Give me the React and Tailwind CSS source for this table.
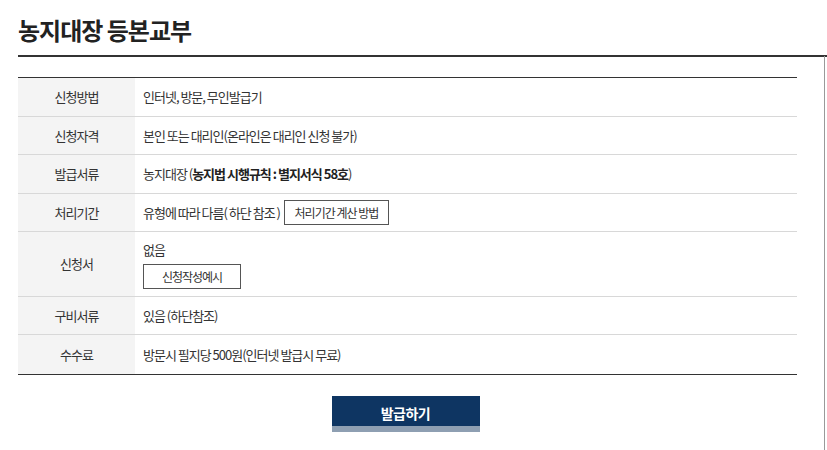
const rows = [
  { label: '신청방법', h: 'h-[39px]', value: <span>인터넷, 방문, 무인발급기</span> },
  { label: '신청자격', h: 'h-[38px]', value: <span>본인 또는 대리인(온라인은 대리인 신청 불가)</span> },
  {
    label: '발급서류',
    h: 'h-[39px]',
    value: (
      <span>
        농지대장 (<b className="font-bold text-[#222]">농지법 시행규칙 : 별지서식 58호</b>)
      </span>
    ),
  },
  {
    label: '처리기간',
    h: 'h-[38px]',
    value: (
      <span className="flex items-center gap-[4px]">
        유형에 따라 다름( 하단 참조 )
        <button className="h-[25px] w-[105px] border border-[#555] bg-white text-[12px] text-[#333]">
          처리기간 계산 방법
        </button>
      </span>
    ),
  },
  {
    label: '신청서',
    h: 'h-[65px]',
    value: (
      <span className="flex flex-col items-start gap-[5px] pt-[1px]">
        없음
        <button className="h-[25px] w-[98px] border border-[#555] bg-white text-[12px] text-[#333]">
          신청작성예시
        </button>
      </span>
    ),
  },
  { label: '구비서류', h: 'h-[38px]', value: <span>있음 (하단참조)</span> },
  { label: '수수료', h: 'h-[39px]', value: <span>방문시 필지당 500원(인터넷 발급시 무료)</span> },
]

export default function App() {
  return (
    <div className="relative h-[450px] w-[827px] overflow-hidden bg-white text-[#333] font-['Noto_Sans_CJK_KR','Noto_Sans',sans-serif]">
      {/* right panel edge */}
      <div className="absolute right-[2px] top-[56px] bottom-0 w-px bg-[#999]" />

      <h1 className="pl-[18px] pt-[14px] h-[55px] text-[24px] font-bold tracking-[-1px] text-[#222] leading-[32px]">
        농지대장 등본교부
      </h1>
      <div className="ml-[18px] h-[2px] bg-[#333]" />

      <div className="mt-[20px] ml-[18px] w-[779px] border-t border-[#333] border-b text-[13px] tracking-[-1px]">
        {rows.map((row, i) => (
          <div
            key={i}
            className={`flex ${row.h} ${i < rows.length - 1 ? 'border-b border-[#d8d8d8]' : ''}`}
          >
            <div className="w-[117px] shrink-0 bg-[#f4f4f4] flex items-center justify-center">
              {row.label}
            </div>
            <div className="flex items-center pl-[8px]">{row.value}</div>
          </div>
        ))}
      </div>

      <div className="flex justify-center mt-[21px] pr-[16px]">
        <button className="w-[148px] h-[36px] flex flex-col">
          <span className="h-[30px] w-full bg-[#0e3562] text-white text-[14px] font-bold tracking-[-0.5px] flex items-center justify-center pt-[4px]">
            발급하기
          </span>
          <span className="h-[6px] w-full bg-[#8e9fb2]" />
        </button>
      </div>
    </div>
  )
}
